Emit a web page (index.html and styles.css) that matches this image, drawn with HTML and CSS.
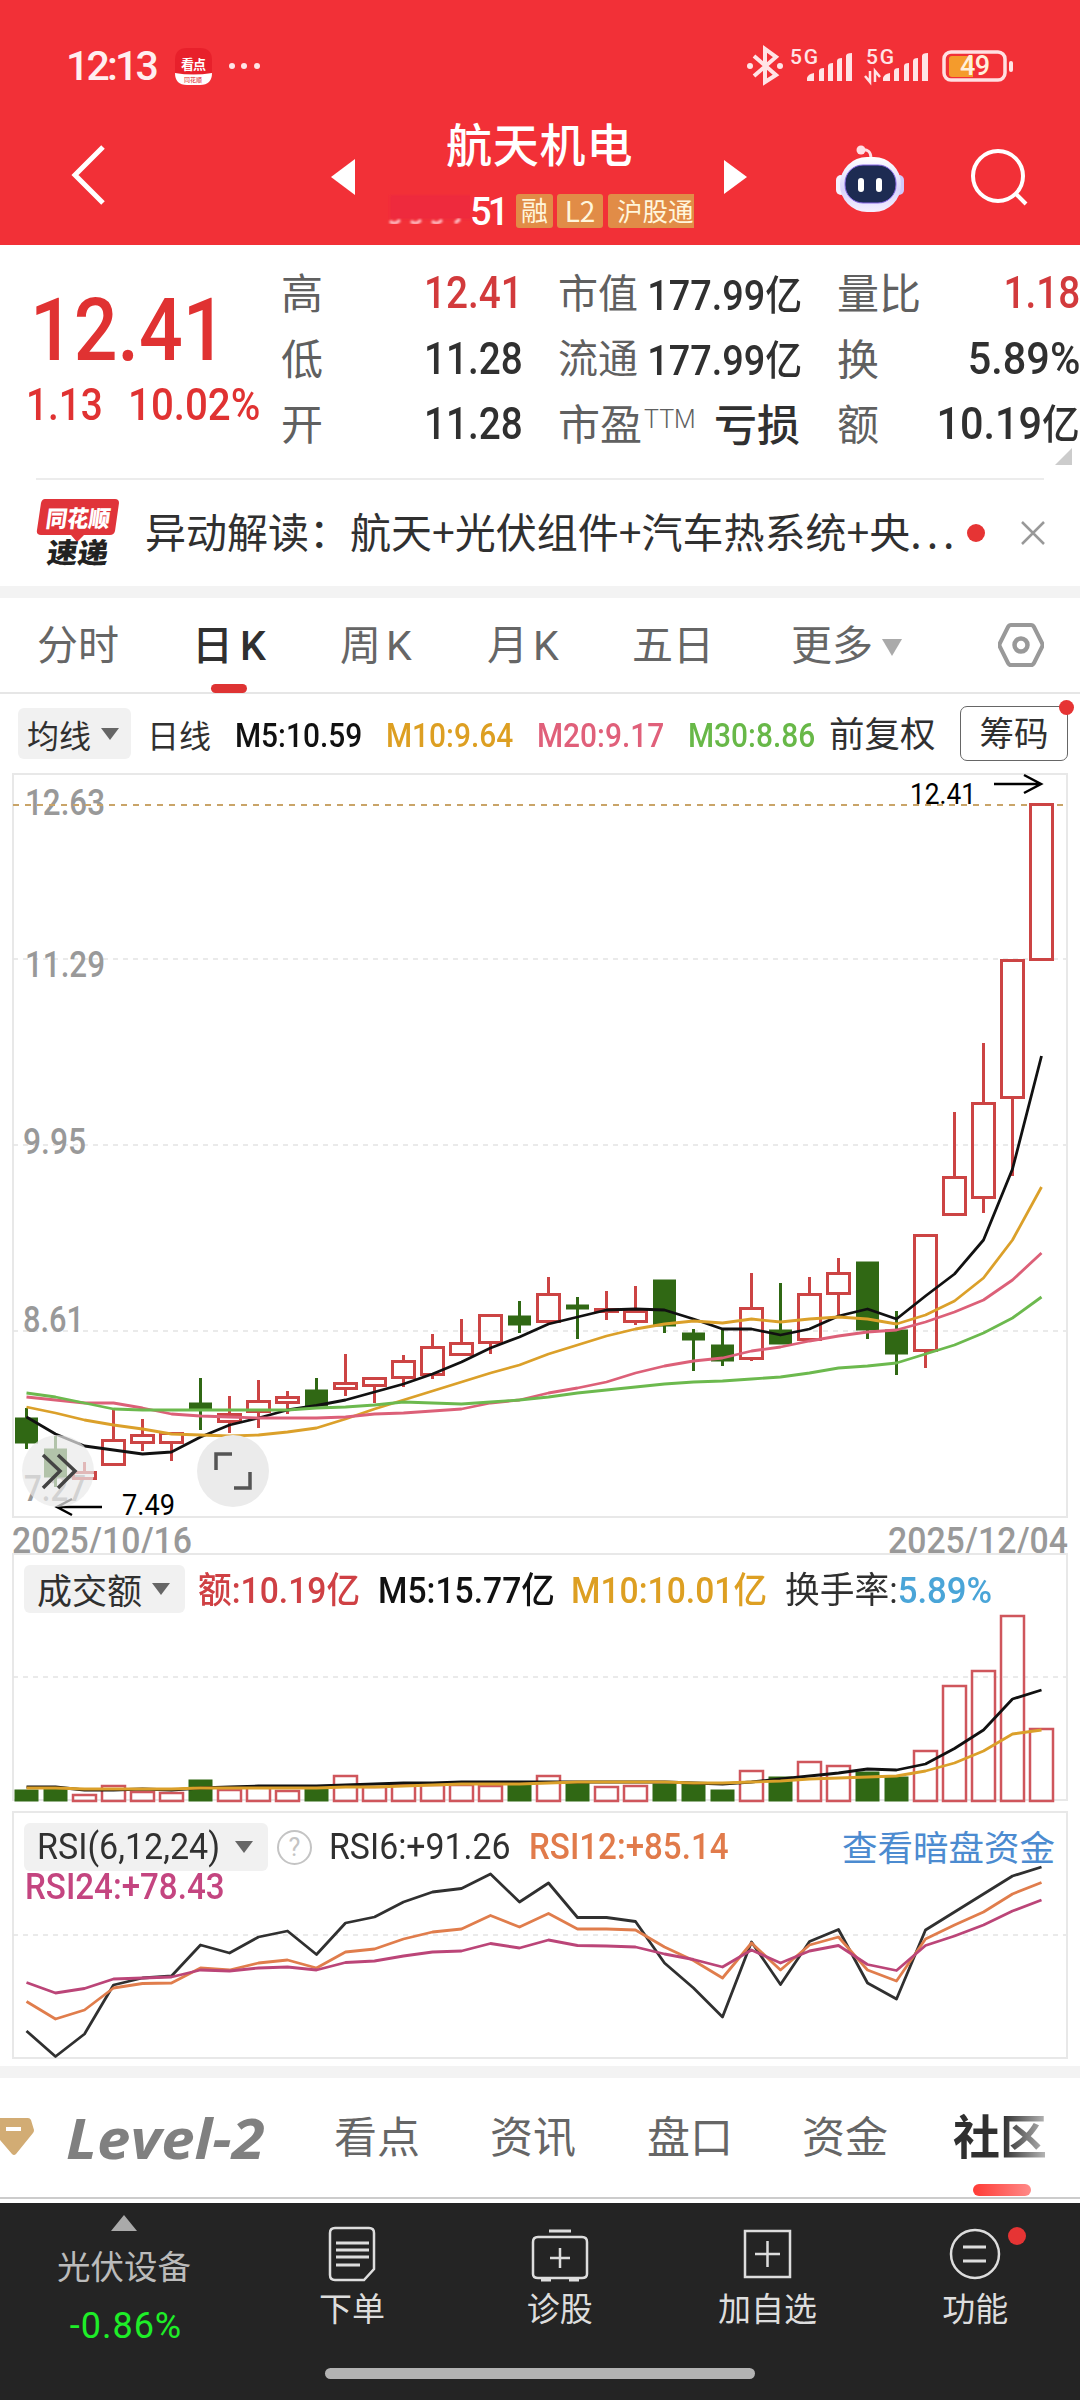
FILE: index.html
```html
<!DOCTYPE html>
<html lang="zh-CN">
<head>
<meta charset="UTF-8" />
<meta name="viewport" content="width=device-width, initial-scale=1" />
<title>航天机电</title>
<link rel="stylesheet" href="styles.css">
</head>
<body>
<header class="header">
  <div class="status">
    <span class="time">12:13</span>
    <svg class="status-left" width="90" height="40" viewBox="175 46 90 40">
      <path d="M187 48h13q12 0 12 12v14h-37V60q0-12 12-12z" fill="#e8202b"/>
      <path d="M175 73q18 3 37 0q0 12-12 12h-13q-12 0-12-12z" fill="#fff"/>
      <text x="181" y="69" font-size="13" font-weight="700" fill="#fff" textLength="25">看点</text>
      <text x="184" y="82" font-size="6" fill="#d22" textLength="18">同花顺</text>
      <circle cx="232" cy="66" r="3"/><circle cx="244" cy="66" r="3"/><circle cx="257" cy="66" r="3"/>
    </svg>
    <svg class="status-right" width="270" height="44" viewBox="745 44 270 44">
      <path d="M754 56L776 75L765 82V49L776 57L754 76" fill="none" stroke="#ffe4e6" stroke-width="4"/>
      <circle cx="750" cy="66" r="3"/><circle cx="780" cy="66" r="3"/>
      <text class="net" x="790" y="64" textLength="28">5G</text>
      <text class="net" x="866" y="64" textLength="28">5G</text>
      <g class="bars">
        <path d="M807 78v3h7v-8q-6 1-7 5zM819 71v10h5V68q-5 0-5 3zM828 66v15h5V63q-5 0-5 3zM837 61v20h5V58q-5 0-5 3zM846 56v25h6V53q-6 0-6 3z"/>
        <path d="M883 78v3h7v-8q-6 1-7 5zM894 71v10h5V68q-5 0-5 3zM904 66v15h5V63q-5 0-5 3zM913 61v20h5V58q-5 0-5 3zM922 56v25h6V53q-6 0-6 3z"/>
      </g>
      <path d="M870 71v11l-5-6M875 82V71l5 6" fill="none" stroke="#ffe4e6" stroke-width="2.5"/>
      <rect x="944" y="52" width="61" height="28" rx="7" fill="none" stroke="#ffe0e2" stroke-width="3.5"/>
      <path d="M952 56h21v21h-21q-3 0-3-3V59q0-3 3-3z" fill="#f49b2c"/>
      <rect x="1009" y="61" width="4" height="11" rx="2"/>
      <text class="batt" x="960" y="75" textLength="30">49</text>
    </svg>
  </div>
  <div class="nav">
    <svg class="back" width="36" height="62" viewBox="0 0 36 62"><path d="M32 3L4 31L32 59" fill="none" stroke="#fff" stroke-width="5"/></svg>
    <svg class="prev" width="24" height="36" viewBox="0 0 24 36"><path d="M24 0V36L0 18z" fill="#fff"/></svg>
    <div class="stock">
      <h1>航天机电</h1>
      <div class="code">
        <svg width="84" height="34" viewBox="386 195 84 34">
          <defs><filter id="smear"><feGaussianBlur stdDeviation="1.3"/></filter></defs>
          <path d="M390 196h86v24h-86z" fill="#ee2b3c" filter="url(#smear)"/>
          <path d="M390 222q4 5 10-1M411 222q4 5 10-1M432 222q4 5 10-1M455 224l5-4" fill="none" stroke="#ffc9cd" stroke-width="3" filter="url(#smear)"/>
        </svg>
        <span class="code-num">51</span>
        <span class="tag">融</span><span class="tag l2">L2</span><span class="tag hgt">沪股通</span>
      </div>
    </div>
    <svg class="next" width="23" height="34" viewBox="0 0 23 34"><path d="M0 0V34L23 17z" fill="#fff"/></svg>
    <svg class="robot" width="70" height="72" viewBox="835 144 70 72">
      <defs><linearGradient id="shell" x2="0" y2="1"><stop offset="0" stop-color="#fff"/><stop offset=".6" stop-color="#d9d4fa"/><stop offset="1" stop-color="#f4efff"/></linearGradient></defs>
      <path d="M861 151q10-2 10 9" fill="none" stroke="#ffdfe5" stroke-width="3"/>
      <circle cx="861" cy="151" r="4.5" fill="#ffdfe5"/>
      <rect x="836" y="176" width="10" height="20" rx="5" fill="#f5f1ff"/><rect x="894" y="176" width="10" height="20" rx="5" fill="#cfc8fb"/>
      <rect x="840" y="158" width="61" height="55" rx="27" fill="url(#shell)"/>
      <rect x="845" y="166" width="51" height="38" rx="18" fill="#1d2b52" stroke="#8a6be8" stroke-width="1"/>
      <rect x="858" y="179" width="6" height="14" rx="3" fill="#fff"/><rect x="876" y="179" width="6" height="14" rx="3" fill="#fff"/>
    </svg>
    <svg class="search" width="58" height="60" viewBox="0 0 58 60"><g fill="none" stroke="#fff" stroke-width="4"><circle cx="28" cy="29" r="25"/><path d="M46 47L56 57"/></g></svg>
  </div>
</header>

<section class="quote">
  <div class="price">
    <strong class="din">12.41</strong>
    <div class="change"><span class="din">1.13</span><span class="din">10.02%</span></div>
  </div>
  <div class="col c1">
    <div><label>高</label><b class="din up">12.41</b></div>
    <div><label>低</label><b class="din">11.28</b></div>
    <div><label>开</label><b class="din">11.28</b></div>
  </div>
  <div class="col c2">
    <div><label>市值</label><b class="din">177.99<i>亿</i></b></div>
    <div><label>流通</label><b class="din">177.99<i>亿</i></b></div>
    <div><label class="pe">市盈<sup>TTM</sup></label><b class="loss">亏损</b></div>
  </div>
  <div class="col c3">
    <div><label>量比</label><b class="din up">1.18</b></div>
    <div><label>换</label><b class="din">5.89%</b></div>
    <div><label>额</label><b class="din">10.19<i>亿</i></b></div>
  </div>
  <span class="corner"></span>
</section>

<section class="news">
  <svg class="news-logo" width="84" height="70" viewBox="36 497 84 70">
    <path d="M45 498h70q4 0 4 4l-4 28q-1 4-5 4H84l-7 7-6-7H41q-5 0-4-5l4-27q1-4 4-4z" fill="#e0343a"/>
    <text x="0" y="0" transform="translate(45 526) skewX(-8)" font-size="23" font-weight="900" fill="#fff" textLength="64" lengthAdjust="spacingAndGlyphs">同花顺</text>
    <text x="0" y="0" transform="translate(46 562) skewX(-8)" font-size="28" font-weight="900" fill="#222" textLength="61" lengthAdjust="spacingAndGlyphs">速递</text>
  </svg>
  <p>异动解读：航天+光伏组件+汽车热系统+央<span class="more">...</span></p>
  <span class="dot"></span>
  <svg class="close" width="24" height="24" viewBox="0 0 24 24"><path d="M1 1L23 23M23 1L1 23" stroke="#999" stroke-width="2.5"/></svg>
</section>

<nav class="tabs">
  <span>分时</span>
  <span class="active">日<em>K</em></span>
  <span>周<em>K</em></span>
  <span>月<em>K</em></span>
  <span>五日</span>
  <span>更多<i class="tri"></i></span>
  <svg width="46" height="44" viewBox="0 0 46 44"><path d="M13 2h20q2 0 3 2l8 16q1 2 0 4l-8 16q-1 2-3 2H13q-2 0-3-2L2 24q-1-2 0-4L10 4q1-2 3-2z" fill="none" stroke="#999" stroke-width="4"/><circle cx="23" cy="22" r="6.5" fill="none" stroke="#999" stroke-width="4.5"/></svg>
</nav>

<section class="ma">
  <span class="pill">均线<i class="tri"></i></span>
  <span class="day">日线</span>
  <span class="din black">M5:10.59</span>
  <span class="din gold">M10:9.64</span>
  <span class="din pink">M20:9.17</span>
  <span class="din green">M30:8.86</span>
  <span class="fq">前复权</span>
  <span class="chip">筹码<i class="dot"></i></span>
</section>

<svg id="kline" class="kline" width="1080" height="780" viewBox="0 773 1080 780"></svg>

<section class="panel volume">
  <svg id="volume" width="1080" height="258" viewBox="0 1553 1080 258"></svg>
  <div class="legend">
    <span class="pill">成交额<i class="tri"></i></span>
    <span class="din red">额:10.19亿</span>
    <span class="din black">M5:15.77亿</span>
    <span class="din gold">M10:10.01亿</span>
    <span class="din dark">换手率:<em>5.89%</em></span>
  </div>
</section>

<section class="panel rsi">
  <svg id="rsi" width="1080" height="255" viewBox="0 1811 1080 255"></svg>
  <div class="legend">
    <span class="pill"><span class="din">RSI(6,12,24)</span><i class="tri"></i></span>
    <span class="help">?</span>
    <span class="din dark">RSI6:+91.26</span>
    <span class="din orange">RSI12:+85.14</span>
    <a>查看暗盘资金</a>
  </div>
  <span class="rsi24 din">RSI24:+78.43</span>
</section>

<nav class="feeds">
  <svg width="34" height="38" viewBox="0 0 34 38"><path d="M0 0h28q2 0 3 2l3 10q0 2-1 3L16 36q-2 2-4 0L0 22z" fill="#d2ac74"/><rect x="6" y="9" width="15" height="4" fill="#fff"/></svg>
  <span class="level">Level-2</span>
  <span>看点</span>
  <span>资讯</span>
  <span>盘口</span>
  <span>资金</span>
  <span class="current">社区</span>
</nav>

<footer class="bottom">
  <div class="items">
    <div class="sector"><i></i><span>光伏设备</span><b>-0.86%</b></div>
    <div class="item">
      <svg width="50" height="58" viewBox="0 0 50 58"><path d="M8 3h34q5 0 5 5v36L37 55H8q-5 0-5-5V8q0-5 5-5z"/><path d="M9 18h33M9 25h33M9 32h33M9 40h24" stroke-width="3"/></svg>
      <span>下单</span>
    </div>
    <div class="item">
      <svg width="60" height="58" viewBox="0 0 60 58"><path d="M8 12h44q5 0 5 5v32q0 4-5 4H8q-5 0-5-4V17q0-5 5-5zM30 23v20M20 33h20"/><path d="M19 6h22M11 55h10M39 55h10" stroke-width="3"/></svg>
      <span>诊股</span>
    </div>
    <div class="item">
      <svg width="50" height="58" viewBox="0 0 50 58"><path d="M3 6h45v46H3zM25.500 16v26M13 29h25"/></svg>
      <span>加自选</span>
    </div>
    <div class="item">
      <svg width="54" height="58" viewBox="0 0 54 58"><circle cx="27" cy="29" r="24"/><path d="M15 22h23M15 36h23" stroke-width="3"/></svg>
      <span>功能</span><i class="dot"></i>
    </div>
  </div>
  <div class="home"></div>
</footer>
<script src="chart.js"></script>
</body>
</html>
```
FILE: styles.css
```css
* {
  box-sizing: border-box;
}
body {
  margin: 0;
  width: 1080px;
  height: 2400px;
  overflow: hidden;
  background: #fff;
  font-family: "Noto Sans CJK SC", sans-serif;
  color: #303030;
}
h1, p {
  margin: 0;
  font-weight: 400;
}
i, em {
  font-style: normal;
}
svg {
  display: block;
  flex: none;
}
span, b, a, label {
  white-space: nowrap;
  flex: none;
}
/* narrow figures */
.din {
  font-family: Roboto, "Noto Sans CJK SC", sans-serif;
  font-weight: 500;
  transform: scaleX(.92);
  transform-origin: left;
}
.up { color: #d23a3c; }
.dot {
  border-radius: 50%;
  background: #e63434;
}

/* header */
.header {
  height: 245px;
  background: #f23037;
}
.status {
  display: flex;
  align-items: center;
  height: 132px;
  padding-left: 66px;
}
.status svg {
  fill: #ffe4e6;
}
.time {
  width: 109px;
  font: 500 41px Roboto, sans-serif;
  letter-spacing: -2.8px;
  color: #ffeef0;
}
.status-right {
  margin-left: 480px;
}
.net {
  font: 500 21px Roboto, sans-serif;
}
.batt {
  font: 500 27px Roboto, sans-serif;
  fill: #fff0dc;
}
.nav {
  display: flex;
  height: 113px;
  padding-left: 71px;
}
.back { margin-top: 12px; }
.prev { margin: 27px 0 0 224px; }
.stock {
  width: 308px;
  margin-left: 31px;
}
.stock h1 {
  height: 62px;
  padding-left: 60px;
  margin-top: -21px;
  font-size: 46px;
  font-weight: 500;
  line-height: 62px;
  letter-spacing: .8px;
  color: #fff;
}
.code {
  display: flex;
  width: 308px;
  height: 34px;
  margin-top: 21px;
  overflow: hidden;
}
.code-num {
  width: 46px;
  font: 500 38px/36px Roboto, sans-serif;
  letter-spacing: -3.8px;
  color: #fff;
}
.tag {
  width: 37px;
  height: 34px;
  margin-right: 4px;
  border-radius: 3px;
  background: #e18c47;
  color: #fff6dc;
  font-size: 27px;
  line-height: 32px;
  text-align: center;
}
.tag.l2 {
  width: 46px;
  margin-right: 5px;
  font-size: 28px;
}
.tag.hgt {
  width: 96px;
  padding-left: 9px;
  font-size: 25.500px;
  text-align: left;
}
.next { margin: 28px 0 0 30px; }
.robot { margin: 11px 0 0 88px; }
.search { margin: 15px 0 0 65px; }

/* quote */
.quote {
  position: relative;
  display: flex;
  height: 235px;
}
.quote::after {
  content: "";
  position: absolute;
  left: 36px;
  right: 36px;
  bottom: 0;
  border-bottom: 2px solid #ececec;
}
.price {
  width: 282px;
  color: #e03232;
}
.price strong {
  display: block;
  height: 80px;
  margin: 45px 0 0 30px;
  font-size: 88px;
  line-height: 80px;
  transform: scaleX(.875);
}
.change {
  display: flex;
  margin-left: 26px;
  font-size: 45px;
  line-height: 70px;
}
.change .din {
  width: 102px;
  transform: scaleX(.86);
}
.change .din + .din {
  transform: scaleX(.895);
}
.col {
  padding-top: 15px;
}
.col div {
  display: flex;
  justify-content: space-between;
  align-items: center;
  height: 65.500px;
}
.col label {
  position: relative;
  top: -2px;
  left: -1px;
  font-size: 42px;
  color: #606060;
}
.col b {
  font-size: 45px;
  font-weight: 500;
  transform-origin: right;
}
.c1 { width: 241px; }
.c2 { width: 243px; margin-left: 36px; }
.c3 { width: 242px; margin-left: 36px; }
.c1 .din { transform: scaleX(.86); }
.c2 .din { transform: scaleX(.9); }
.c3 .up { transform: scaleX(.86); }
.c2 label { font-size: 40px; }
.c2 .pe { font-size: 42px; display: flex; }
.pe sup {
  font: 300 25px/30px Roboto, sans-serif;
  margin: 14px 0 0 2px;
}
.c2 b.din {
  margin: -2px 0 0 -20px;
  font-size: 42px;
}
.c3 i { line-height: 1; }
.col i {
  font-size: 41px;
  font-weight: 500;
  font-family: "Noto Sans CJK SC", sans-serif;
}
.c2 .loss {
  position: relative;
  top: -2px;
  left: -2px;
  font-size: 43px;
}
.corner {
  position: absolute;
  left: 1055px;
  top: 203px;
  border-left: 17px solid transparent;
  border-bottom: 17px solid #ccc;
}

/* news */
.news {
  display: flex;
  align-items: center;
  height: 106px;
  padding-left: 36px;
}
.news p {
  width: 821px;
  margin-top: -6px;
  padding-left: 25px;
  font-size: 41px;
  white-space: nowrap;
}
.more { letter-spacing: 5px; }
.news .dot {
  width: 18px;
  height: 18px;
  margin-left: 26px;
}
.close { margin-left: 36px; }

/* period tabs */
.tabs {
  display: grid;
  grid-template-columns: 160px 143px 147px 145px 159px 206px auto;
  align-items: center;
  height: 108px;
  padding-left: 38px;
  border-top: 12px solid #f3f3f3;
  border-bottom: 2px solid #e6e6e6;
  font-size: 41px;
  color: #666;
}
.tabs span { margin: -7px 0 0 -1px; }
.tabs em {
  font-family: Roboto, sans-serif;
  margin-left: 5px;
}
.tabs .active {
  position: relative;
  margin-left: -6px;
  color: #303030;
  font-weight: 500;
}
.tabs .active em { margin-left: 7px; }
.active::after {
  content: "";
  position: absolute;
  left: 19px;
  top: 72px;
  width: 36px;
  height: 9px;
  border-radius: 5px;
  background: #de3333;
}
.tri {
  display: inline-block;
  border: 9px solid transparent;
  border-top: 12px solid #666;
  border-bottom: 0;
  margin-left: 10px;
  vertical-align: 5px;
}
.tabs .tri {
  border-width: 17px 10.500px 0;
  border-top-color: #aaa;
  margin-left: 9px;
  vertical-align: 4px;
}
.pill {
  display: flex;
  align-items: center;
  border-radius: 6px;
  background: #f1f1f1;
  color: #303030;
}

/* moving averages */
.ma {
  display: flex;
  align-items: center;
  height: 79px;
  padding-left: 18px;
  font-size: 33px;
}
.ma .pill {
  width: 113px;
  height: 51px;
  padding-left: 9px;
  font-size: 32px;
  line-height: 46px;
}
.ma .day {
  width: 88px;
  margin-left: 16px;
  font-size: 32px;
}
.ma .din {
  width: 151px;
  padding-top: 3px;
  transform: scaleX(.905);
}
.black { color: #111; }
.dark { color: #303030; }
.gold { color: #dd9f22; }
.pink { color: #e0607a; }
.green { color: #68b848; }
.red { color: #cf4044; }
.orange { color: #e17b4b; }
.fq {
  width: 131px;
  margin: -4px 0 0 -10px;
  font-size: 35.500px;
}
.chip {
  position: relative;
  width: 108px;
  height: 55px;
  border: 1.500px solid #666;
  border-radius: 7px;
  font-size: 34.500px;
  line-height: 49px;
  text-align: center;
}
.chip .dot {
  position: absolute;
  right: -7px;
  top: -7px;
  width: 15px;
  height: 15px;
}

/* charts */
svg text {
  font-family: Roboto, "Noto Sans CJK SC", sans-serif;
}
.frame { fill: none; stroke: #e8e8e8; stroke-width: 2; }
.grid { stroke: #e4e4e4; stroke-width: 1.500; stroke-dasharray: 5 5; }
.last { stroke: #c9a468; stroke-width: 2; stroke-dasharray: 6 6; }
.bull { fill: none; stroke: #cc4444; stroke-width: 3; }
.volume .bull { stroke: #cf565c; stroke-width: 2.500; }
.bear { fill: #306814; stroke: #306814; }
.line { fill: none; stroke-width: 2.800; stroke-linejoin: round; }
svg text.axis {
  fill: #999;
  font: 500 36px Roboto, sans-serif;
}
.mark { font-size: 30px; }
.panel {
  position: relative;
  height: 258px;
}
.panel > svg {
  position: absolute;
  left: 0;
  top: 0;
}
.rsi {
  height: 255px;
}
.legend {
  position: relative;
  display: flex;
  align-items: center;
  height: 48px;
  margin: 0 0 0 24px;
  top: 12px;
  font-size: 36px;
}
.legend > .din, .legend a {
  margin-top: -4px;
}
.legend .pill {
  width: 161px;
  height: 48px;
  padding-left: 13px;
  margin-right: 13px;
  font-size: 35px;
  line-height: 44px;
}
.volume .din { transform: scaleX(.935); }
.volume .red { width: 180px; }
.volume .black { width: 193px; }
.volume .gold { width: 214px; }
.volume .dark {
  font-weight: 400;
  transform: scaleX(.965);
}
.legend em {
  color: #4aa5d8;
  font-weight: 500;
}
.rsi .pill {
  width: 244px;
  margin-right: 9px;
  font-size: 37px;
}
.pill .din {
  width: 188px;
  font-weight: 400;
}
.help {
  width: 35px;
  height: 35px;
  border: 2.500px solid #c4c4c4;
  border-radius: 50%;
  color: #c4c4c4;
  font: 400 25px/31px Roboto, sans-serif;
  text-align: center;
}
.rsi .dark {
  width: 200px;
  margin-left: 17px;
  font-weight: 400;
  transform: scaleX(.94);
}
.rsi .orange { width: 313px; }
.rsi .legend > .din { margin-top: 0; }
.legend a {
  font-size: 35.500px;
  color: #4c8bd0;
}
.rsi24 {
  position: relative;
  display: block;
  margin: 2px 0 0 25px;
  font-size: 36px;
  line-height: 52px;
  color: #c44580;
}

/* feed tabs */
.feeds {
  display: grid;
  grid-template-columns: 67px 268px 156px 157px 155px 151px 110px;
  align-items: center;
  height: 137px;
  border-top: 12px solid #f3f3f3;
  font-size: 43px;
  color: #666;
  position: relative;
}
.feeds span { margin: -14px 0 0 -1px; }
.feeds svg { margin-top: -8px; }
.feeds::after {
  content: "";
  position: absolute;
  width: 100%;
  top: 119px;
  border-top: 2px solid #ccc;
}
.feeds .level {
  margin-top: -7px;
  font: italic 700 55px "Open Sans", sans-serif;
  color: #808080;
  transform: scaleX(1.09);
  transform-origin: left;
}
.feeds .current {
  font-size: 47px;
  font-weight: 700;
  background: linear-gradient(90deg, #303030 45%, #ccc 90%);
  background-clip: text;
  -webkit-background-clip: text;
  color: transparent;
}
.current::after {
  content: "";
  position: absolute;
  left: 973px;
  top: 106px;
  width: 58px;
  height: 12px;
  border-radius: 6px;
  background: linear-gradient(90deg, #ff3b35, #ff8a88);
}

/* bottom bar */
.bottom {
  height: 197px;
  background: #242424;
  color: #ddd;
}
.items {
  display: flex;
  height: 165px;
}
.sector {
  display: flex;
  flex-direction: column;
  align-items: center;
  width: 248px;
  font-size: 33.500px;
  line-height: 40px;
}
.sector i {
  margin: 12px 0 14px;
  border: 13.500px solid transparent;
  border-top: 0;
  border-bottom: 16px solid #aaa;
}
.sector span { color: #bbb; }
.sector b {
  margin: 19px 0 0 4px;
  font: 400 36px/44px Roboto, sans-serif;
  letter-spacing: 1px;
  color: #1eee28;
}
.item {
  position: relative;
  display: flex;
  flex-direction: column;
  align-items: center;
  width: 207.800px;
  padding-top: 22px;
  font-size: 33px;
  line-height: 49px;
}
.item svg {
  fill: none;
  stroke: #ddd;
  stroke-width: 2.500;
}
.item .dot {
  position: absolute;
  left: 137px;
  top: 24px;
  width: 18px;
  height: 18px;
}
.home {
  width: 430px;
  height: 11px;
  margin: 0 auto;
  border-radius: 6px;
  background: #b3b3b3;
}
```
FILE: chart.js
```js
(function () {
  const STEP = 29;
  const X0 = 26.5;
  const x = (i) => X0 + STEP * i;

  // [up, high, top, bottom, low]
  const candles = [
    [0, 1408, 1418, 1443, 1449], [0, 1436, 1449, 1477, 1487], [1, 1462, 1471, 1480, 1480],
    [1, 1410, 1439, 1466, 1466], [1, 1419, 1434, 1444, 1451], [1, 1432, 1432, 1444, 1461],
    [0, 1378, 1403, 1409, 1430], [1, 1396, 1413, 1423, 1433], [1, 1380, 1400, 1413, 1428],
    [1, 1391, 1396, 1404, 1414], [0, 1378, 1390, 1406, 1406], [1, 1354, 1382, 1390, 1396],
    [1, 1377, 1377, 1387, 1403], [1, 1355, 1360, 1379, 1387], [1, 1334, 1346, 1376, 1379],
    [1, 1319, 1342, 1356, 1356], [1, 1314, 1314, 1344, 1354], [0, 1301, 1316, 1325, 1333],
    [1, 1277, 1293, 1323, 1323], [0, 1297, 1305, 1309, 1339], [1, 1291, 1308, 1313, 1320],
    [1, 1286, 1310, 1323, 1325], [0, 1280, 1280, 1326, 1333], [0, 1329, 1333, 1340, 1371],
    [0, 1329, 1345, 1361, 1366], [1, 1273, 1307, 1360, 1361], [0, 1283, 1330, 1344, 1344],
    [1, 1277, 1293, 1341, 1341], [1, 1258, 1272, 1295, 1315], [0, 1262, 1262, 1330, 1339],
    [0, 1311, 1330, 1354, 1375], [1, 1234, 1234, 1352, 1368], [1, 1112, 1176, 1216, 1216],
    [1, 1043, 1102, 1199, 1213], [1, 959, 959, 1099, 1176], [1, 803, 803, 961, 961]
  ];
  const ma5 = [1417, 1434, 1446, 1450, 1454, 1452, 1437, 1425, 1418, 1410, 1405.5, 1400, 1392, 1384, 1374, 1362, 1348, 1337, 1324, 1317, 1310, 1309, 1310, 1319, 1329, 1329, 1335, 1329, 1316, 1309, 1319, 1296, 1274, 1240, 1169, 1056];
  const ma10 = [1407, 1413, 1420, 1425, 1429, 1434, 1435, 1436, 1435, 1432, 1428, 1419, 1409, 1400, 1391, 1382, 1373, 1365, 1354, 1345, 1336, 1329, 1324, 1321, 1323, 1319, 1322, 1319, 1317, 1319, 1324, 1315, 1301, 1278, 1240, 1187];
  const ma20 = [1397, 1400, 1403, 1403, 1408, 1414, 1416, 1417, 1418, 1418, 1418, 1417, 1414, 1413, 1411, 1409, 1403, 1400, 1393, 1388, 1382, 1373, 1366, 1361, 1358, 1351, 1347, 1341, 1336, 1332, 1330, 1322, 1312, 1300, 1280, 1253];
  const ma30 = [1393, 1397, 1403, 1409, 1410, 1410, 1410, 1410, 1410, 1410, 1408, 1407, 1405, 1402, 1403, 1404, 1402, 1400, 1397, 1393, 1390, 1387, 1384, 1382, 1381, 1379, 1377, 1373, 1368, 1366, 1363, 1354, 1345, 1333, 1318, 1297];

  const volumes = [1790, 1789, 1794, 1785, 1791, 1792, 1780, 1789, 1786, 1790, 1789, 1775, 1786, 1784, 1784, 1784, 1785, 1785, 1775, 1783, 1786, 1785, 1784, 1784, 1790, 1770, 1777, 1761, 1765, 1772, 1777, 1750, 1685, 1670, 1615, 1728];
  const vol5 = [1787, 1787, 1790, 1790, 1789, 1790, 1788, 1787, 1786, 1786, 1786, 1785, 1784, 1783, 1783, 1782, 1782, 1782, 1782, 1782, 1782, 1782, 1782, 1783, 1784, 1782, 1779, 1776, 1773, 1769, 1770, 1764, 1748.5, 1730, 1699, 1690];
  const vol10 = [1788, 1788, 1789, 1789, 1789, 1789, 1788, 1788, 1788, 1788, 1788, 1787, 1787, 1786, 1785, 1784, 1784, 1784, 1783, 1782, 1782, 1782, 1782, 1783, 1783, 1782, 1781, 1779, 1778, 1777, 1776, 1771, 1763, 1751, 1734, 1730];

  const rsi6 = [2031, 2056.5, 2034, 1985, 1978, 1976, 1945, 1953, 1937, 1931, 1954.5, 1923, 1917, 1902, 1892, 1888.5, 1874, 1902, 1883, 1917.5, 1917.5, 1921.5, 1963, 1988, 2017, 1942, 1984.5, 1941.5, 1929.5, 1983, 1999, 1930, 1912, 1894, 1876, 1867];
  const rsi12 = [2001.5, 2019, 2010, 1988, 1983.5, 1983, 1968, 1970, 1963, 1960, 1968, 1952, 1949, 1939, 1932, 1929, 1915.5, 1927, 1913.5, 1929, 1929, 1930, 1947, 1960.5, 1978, 1943, 1970, 1945, 1937, 1970, 1981, 1939, 1925, 1912, 1894, 1882.5];
  const rsi24 = [1982.5, 1993, 1988.5, 1979, 1978, 1977, 1970, 1971, 1968, 1967, 1970, 1962.5, 1961, 1956, 1952, 1951, 1943.5, 1948, 1940, 1945.5, 1946, 1947, 1954, 1959.5, 1967, 1950, 1963, 1951, 1945.5, 1964.5, 1970.5, 1945.5, 1936, 1925, 1911, 1900];

  const frame = (top, bottom) => `<rect class="frame" x="13" y="${top}" width="1054" height="${bottom - top}"/>`;
  const dash = (y, cls) => `<path class="${cls || 'grid'}" d="M13 ${y}H1066"/>`;
  const line = (ys, color) => `<polyline class="line" stroke="${color}" points="${ys.map((y, i) => x(i) + ',' + y).join(' ')}"/>`;
  const label = (text, lx, y, w, cls) => `<text class="${cls || 'axis'}" x="${lx}" y="${y}" textLength="${w}" lengthAdjust="spacingAndGlyphs">${text}</text>`;

  function candle([up, high, top, bottom, low], i) {
    const c = x(i);
    if (up) {
      return `<path class="bull" d="M${c} ${high}V${top}M${c} ${bottom}V${low}"/>` +
        `<rect class="bull" x="${c - 11}" y="${top + 1.5}" width="22" height="${bottom - top - 3}"/>`;
    }
    return `<path class="bear" stroke-width="3" d="M${c} ${high}V${low}"/>` +
      `<rect class="bear" stroke="none" x="${c - 11}" y="${top}" width="22" height="${bottom - top}"/>`;
  }

  function volumeBar(top, i) {
    const c = x(i);
    return candles[i][0]
      ? `<rect class="bull" x="${c - 11.5}" y="${top + 1}" width="23" height="${1800 - top}"/>`
      : `<rect class="bear" stroke="none" x="${c - 11.5}" y="${top}" width="23" height="${1801 - top}"/>`;
  }

  document.getElementById('kline').innerHTML =
    frame(774, 1517) + dash(959) + dash(1145) + dash(1331) +
    label('12.63', 25, 815, 80) + label('11.29', 25, 977, 80) + label('9.95', 23, 1154, 63) +
    label('8.61', 23, 1332, 61) + label('7.27', 24, 1501, 62) +
    dash(805, 'last') +
    candles.map(candle).join('') +
    line(ma5, '#111') + line(ma10, '#dba02a') + line(ma20, '#dc6078') + line(ma30, '#6cb94e') +
    label('12.41', 910, 804, 66, 'mark') +
    '<path d="M994 784H1041M1024 775L1041 784L1024 793M102 1507H57M72 1499L57 1507L72 1515" fill="none" stroke="#000" stroke-width="2.5"/>' +
    label('7.49', 122, 1515, 53, 'mark') +
    '<circle cx="58" cy="1471" r="36" fill="#e9e9e9" fill-opacity=".7"/><circle cx="233" cy="1471" r="36" fill="#ebebeb"/>' +
    '<path d="M43 1455L60 1471L43 1488M58 1455L75 1471L58 1488" fill="none" stroke="#444" stroke-width="3.5"/>' +
    '<path d="M216 1470V1454H232M234 1488H250V1472" fill="none" stroke="#555" stroke-width="3.5"/>' +
    label('2025/10/16', 12, 1553, 180) + label('2025/12/04', 888, 1553, 180);

  document.getElementById('volume').innerHTML =
    frame(1554, 1800) + dash(1677) + volumes.map(volumeBar).join('') +
    line(vol5, '#111') + line(vol10, '#dba02a');

  document.getElementById('rsi').innerHTML =
    frame(1812, 2058) + dash(1935) +
    line(rsi6, '#303030') + line(rsi12, '#e07d4c') + line(rsi24, '#bb4578');
})();
```
